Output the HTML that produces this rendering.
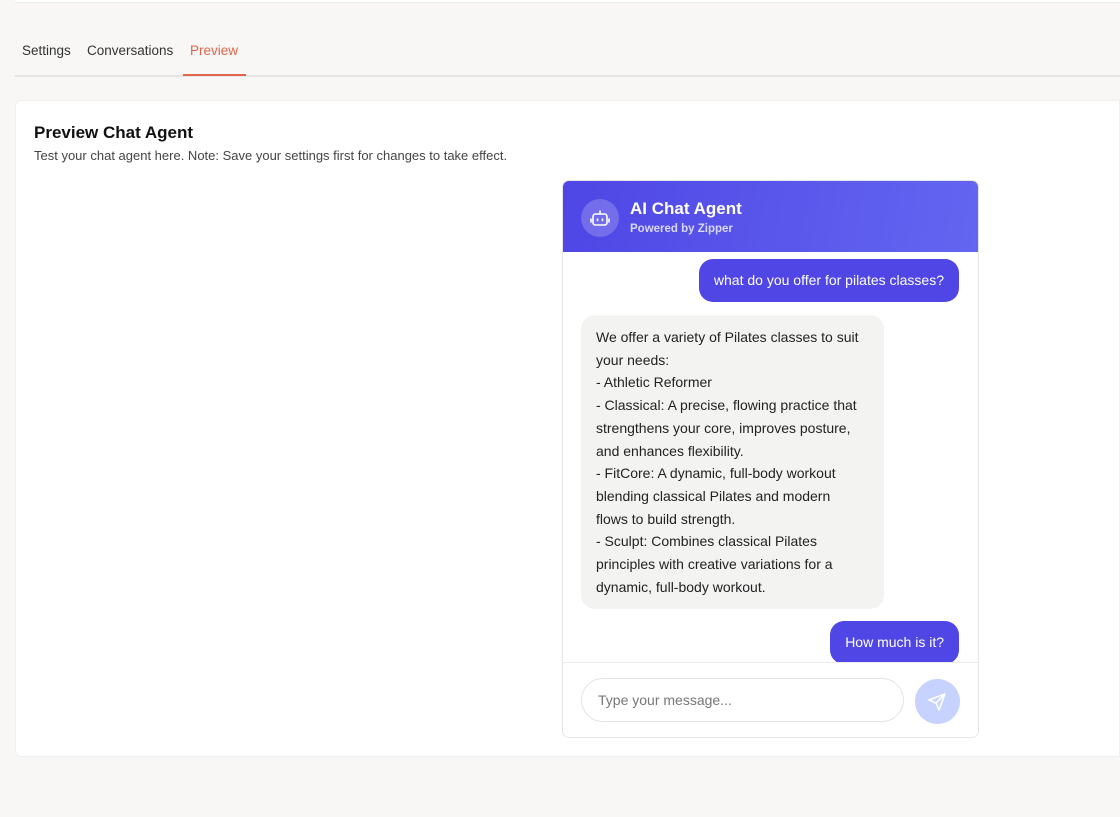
<!DOCTYPE html>
<html><head><meta charset="utf-8"><style>
*{box-sizing:border-box;margin:0;padding:0}
body{width:1120px;height:817px;background:#f8f7f5;font-family:"Liberation Sans",sans-serif;color:#222;position:relative;overflow:hidden}
.topline{position:absolute;left:15px;right:0;top:0;height:3px;background:#fff;border-bottom:1px solid #eee}
.tabs{position:absolute;top:43px;left:22px;font-size:13.5px;color:#333}
.tabs span{position:absolute;white-space:nowrap}
.tabline{position:absolute;left:15px;right:0;top:75px;height:2px;background:#e6e5e3}
.active{position:absolute;left:183px;width:63px;top:74px;height:2px;background:#e0654a}
.card{position:absolute;left:15px;top:100px;right:0;height:657px;background:#fff;border:1px solid #efefef;border-radius:6px 0 0 6px}
h1{position:absolute;left:34px;top:123px;font-size:17px;font-weight:bold;color:#111}
.sub{position:absolute;left:34px;top:148px;font-size:13px;color:#444}
.chat{position:absolute;left:562px;top:180px;width:417px;height:558px;border:1px solid #e5e5e5;border-radius:7px;overflow:hidden;background:#fff}
.hdr{height:71px;background:linear-gradient(100deg,#4f46e5,#6366f1);position:relative;color:#fff}
.ic{position:absolute;left:18px;top:18px;width:38px;height:38px;border-radius:50%;background:rgba(255,255,255,.2)}
.t1{position:absolute;left:67px;top:18px;font-size:17px;font-weight:bold}
.t2{position:absolute;left:67px;top:42px;font-size:11.5px;font-weight:bold;color:#d8d8fb}
.msgs{position:absolute;top:71px;left:0;right:0;height:411px;overflow:hidden;border-bottom:1px solid #ececec}
.u{position:absolute;right:19px;background:#4f46e5;color:#fff;font-size:14px;border-radius:14px;padding:0 15px;line-height:43px;white-space:nowrap}
.b{position:absolute;left:18px;top:63px;width:303px;background:#f3f3f2;border-radius:14px;padding:11px 15px;font-size:14px;line-height:22.7px;color:#222;white-space:nowrap}
.inp{position:absolute;left:18px;top:497px;width:323px;height:44px;border:1px solid #e3e3e3;border-radius:22px;font-size:14px;color:#777;padding:13px 16px}
.send{position:absolute;left:352px;top:498px;width:45px;height:45px;border-radius:50%;background:#c7d2fe}
</style></head><body>
<div class="topline"></div>
<div class="tabs"><span style="left:0">Settings</span><span style="left:65px">Conversations</span><span style="left:168px;color:#e0654a">Preview</span></div>
<div class="tabline"></div><div class="active"></div>
<div class="card"></div>
<h1>Preview Chat Agent</h1>
<div class="sub">Test your chat agent here. Note: Save your settings first for changes to take effect.</div>
<div class="chat">
 <div class="hdr"><div class="ic"><svg width="38" height="38" viewBox="0 0 38 38" fill="none" stroke="#fff" stroke-width="1.6" stroke-linecap="round"><rect x="12" y="15" width="14" height="11" rx="2.5"/><path d="M19 15v-3M10 20v3M28 20v3"/><path d="M16.5 20v1.5M21.5 20v1.5"/></svg></div>
 <div class="t1">AI Chat Agent</div><div class="t2">Powered by Zipper</div></div>
 <div class="msgs">
  <div class="u" style="top:7px">what do you offer for pilates classes?</div>
  <div class="b">We offer a variety of Pilates classes to suit<br>your needs:<br>- Athletic Reformer<br>- Classical: A precise, flowing practice that<br>strengthens your core, improves posture,<br>and enhances flexibility.<br>- FitCore: A dynamic, full-body workout<br>blending classical Pilates and modern<br>flows to build strength.<br>- Sculpt: Combines classical Pilates<br>principles with creative variations for a<br>dynamic, full-body workout.</div>
  <div class="u" style="top:369px">How much is it?</div>
 </div>
 <div class="inp">Type your message...</div>
 <div class="send"><svg width="45" height="45" viewBox="0 0 45 45" fill="none" stroke="#fff" stroke-width="1.6" stroke-linejoin="round"><path d="M30 15L14 21l7 3 3 7z M30 15L21 24"/></svg></div>
</div>
</body></html>
